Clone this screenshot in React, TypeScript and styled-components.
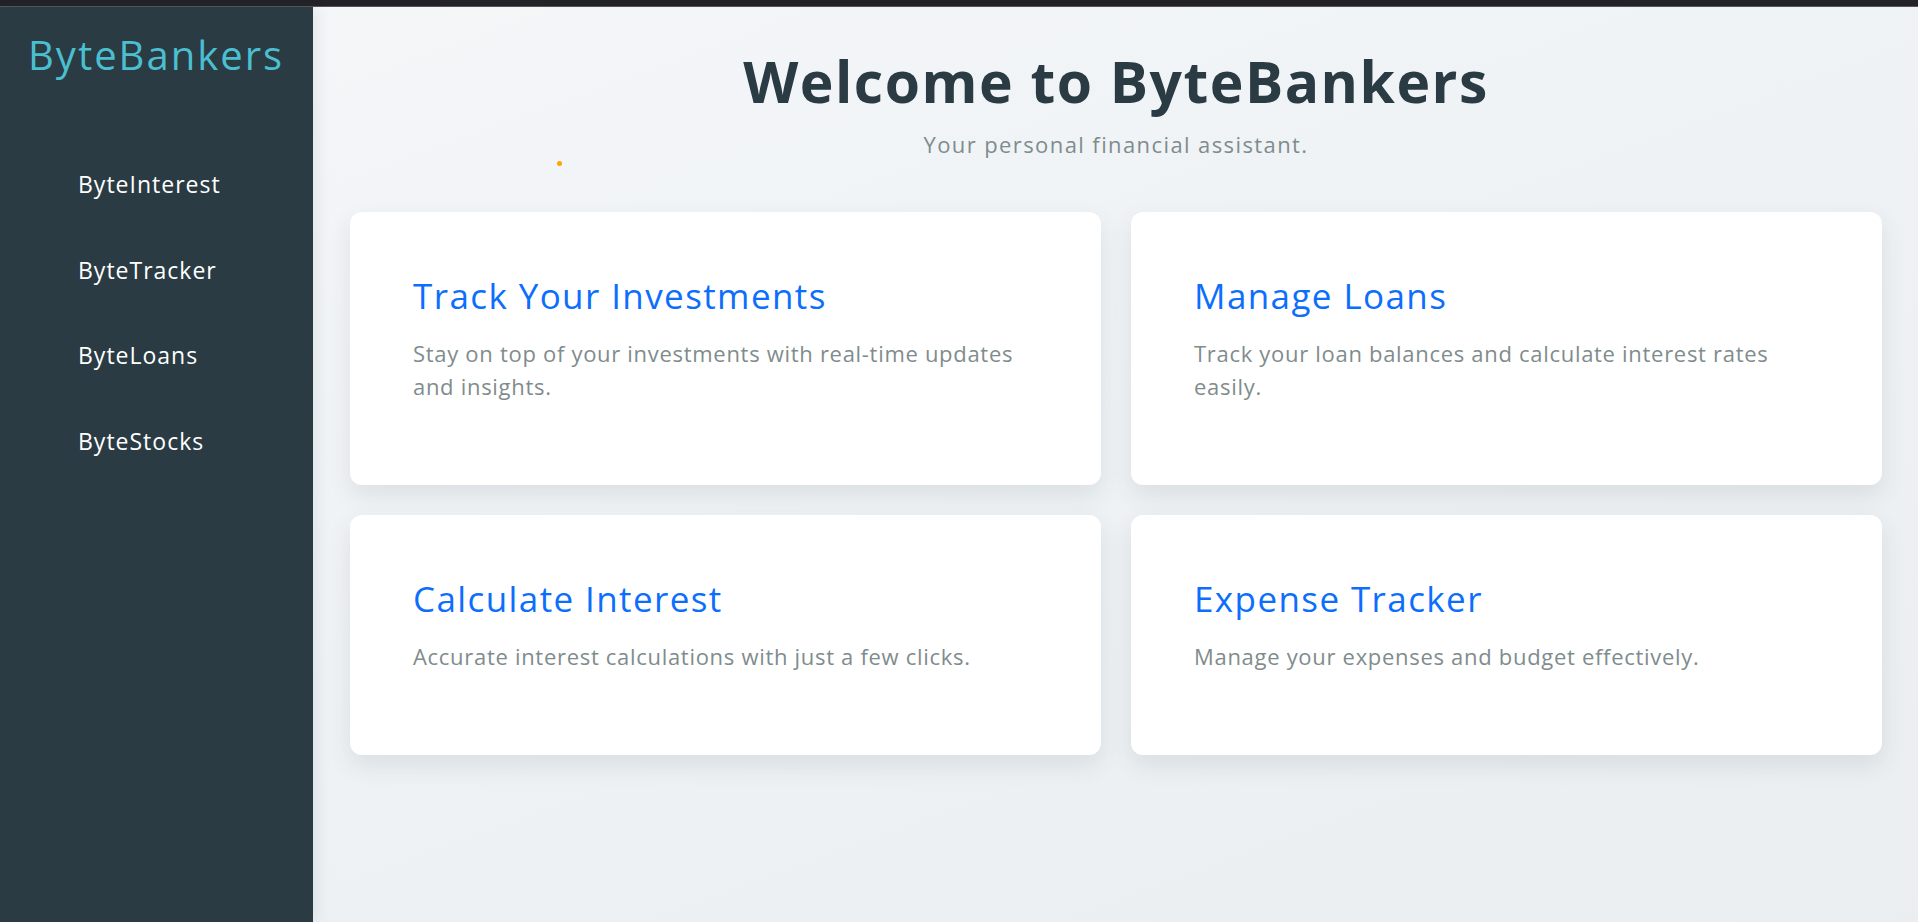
import React from 'react';
import styled, { createGlobalStyle } from 'styled-components';

const GlobalStyle = createGlobalStyle`
  html, body {
    margin: 0;
    padding: 0;
    height: 100%;
  }

  body {
    font-family: 'Open Sans', 'Liberation Sans', sans-serif;
    background: #eef1f4;
    overflow: hidden;
  }

  * {
    box-sizing: border-box;
  }
`;

const TopStrip = styled.div`
  height: 7px;
  background: #232227;
  border-bottom: 1px solid #55555a;
`;

const Layout = styled.div`
  display: flex;
  height: calc(100vh - 7px);
`;

const Sidebar = styled.aside`
  width: 313px;
  flex-shrink: 0;
  background: #2a3b44;
  padding: 22px 0 0 28px;
  display: flex;
  flex-direction: column;
  position: relative;
  z-index: 1;
  box-shadow: 4px 0 14px rgba(40, 50, 60, 0.08);
`;

const Logo = styled.div`
  color: #4bbfcf;
  font-size: 40px;
  line-height: 52px;
  letter-spacing: 2px;
`;

const NavList = styled.nav`
  display: flex;
  flex-direction: column;
  gap: 53.5px;
  margin-top: 87px;
  padding-left: 50px;
`;

const NavLink = styled.a`
  color: #ffffff;
  font-size: 23px;
  line-height: 32px;
  letter-spacing: 1px;
  text-decoration: none;
  cursor: pointer;
`;

const Main = styled.main`
  flex: 1;
  padding: 38px 36px 0 37px;
  background: linear-gradient(160deg, #f4f6f8 0%, #edf1f4 60%, #eaeef1 100%);
  position: relative;
`;

const Header = styled.header`
  text-align: center;
`;

const Title = styled.h1`
  margin: 0;
  color: #2a3b44;
  font-size: 57px;
  line-height: 72px;
  letter-spacing: 1.5px;
  font-weight: 700;
`;

const Subtitle = styled.p`
  margin: 12px 0 0;
  color: #7f8c8d;
  font-size: 22px;
  line-height: 30px;
  letter-spacing: 1.4px;
`;

const Spark = styled.span`
  position: absolute;
  left: 244px;
  top: 154px;
  width: 5px;
  height: 5px;
  border-radius: 50%;
  background: #ffa500;
`;

const CardGrid = styled.section`
  display: grid;
  grid-template-columns: 1fr 1fr;
  gap: 30px 30px;
  margin-top: 53px;
`;

const Card = styled.div`
  background: #ffffff;
  border-radius: 12px;
  padding: 62px 63px 62px;
  box-shadow: 0 10px 25px rgba(40, 55, 70, 0.1);
`;

const CardTitle = styled.h2`
  margin: 0 0 20px;
  color: #0d6efd;
  font-size: 35px;
  line-height: 43px;
  letter-spacing: 1.4px;
  font-weight: 400;
`;

const CardText = styled.p`
  margin: 0 0 20px;
  color: #7f8c8d;
  font-size: 22px;
  line-height: 33px;
  letter-spacing: 0.7px;
`;

const navItems = ['ByteInterest', 'ByteTracker', 'ByteLoans', 'ByteStocks'];

const features = [
  {
    title: 'Track Your Investments',
    text: 'Stay on top of your investments with real-time updates and insights.',
  },
  {
    title: 'Manage Loans',
    text: 'Track your loan balances and calculate interest rates easily.',
  },
  {
    title: 'Calculate Interest',
    text: 'Accurate interest calculations with just a few clicks.',
  },
  {
    title: 'Expense Tracker',
    text: 'Manage your expenses and budget effectively.',
  },
];

const App = () => (
  <>
    <GlobalStyle />
    <TopStrip />
    <Layout>
      <Sidebar>
        <Logo>ByteBankers</Logo>
        <NavList>
          {navItems.map((item) => (
            <NavLink key={item}>{item}</NavLink>
          ))}
        </NavList>
      </Sidebar>

      <Main>
        <Spark />
        <Header>
          <Title>Welcome to ByteBankers</Title>
          <Subtitle>Your personal financial assistant.</Subtitle>
        </Header>

        <CardGrid>
          {features.map((f) => (
            <Card key={f.title}>
              <CardTitle>{f.title}</CardTitle>
              <CardText>{f.text}</CardText>
            </Card>
          ))}
        </CardGrid>
      </Main>
    </Layout>
  </>
);

export default App;
